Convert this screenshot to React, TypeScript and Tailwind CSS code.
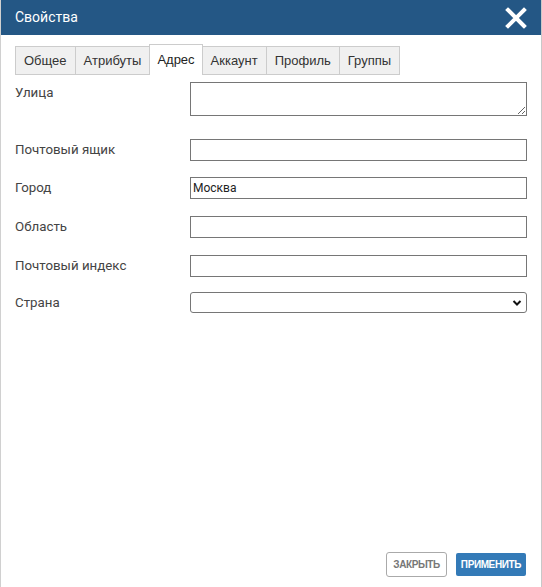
import React from "react";

const tabs = ["Общее", "Атрибуты", "Адрес", "Аккаунт", "Профиль", "Группы"];

function Row({
  label,
  children,
  className = "",
}: {
  label: string;
  children: React.ReactNode;
  className?: string;
}) {
  return (
    <div className={`flex items-start ${className}`}>
      <label className="w-[175px] shrink-0 pt-[3px] text-[13.3px] leading-[16px] text-[#444]">
        {label}
      </label>
      <div className="flex-1">{children}</div>
    </div>
  );
}

export default function App() {
  return (
    <div
      className="flex h-[587px] w-[542px] bg-white"
      style={{ fontFamily: 'Roboto, "Liberation Sans", Arial, sans-serif' }}
    >
      <div className="flex w-[541px] flex-col border-l border-[#d0d0d0]">
        <div className="flex h-[35px] shrink-0 items-center justify-between bg-[#245785] pl-[14px] pr-[14px]">
          <span className="text-[14px] text-white">Свойства</span>
          <svg width="22" height="22" viewBox="0 0 22 22">
            <path
              d="M3 3 L19 19 M19 3 L3 19"
              stroke="white"
              strokeWidth="4"
              strokeLinecap="square"
            />
          </svg>
        </div>

        <div className="flex flex-1 flex-col px-[14px]">
          <div
            className="mt-[9px] flex items-end"
            style={{ fontFamily: '"Liberation Sans", Arial, sans-serif' }}
          >
            {tabs.map((t) => {
              const active = t === "Адрес";
              return (
                <div
                  key={t}
                  className={
                    active
                      ? "-ml-px flex h-[31px] items-center border border-b-0 border-[#ccc] bg-white px-[7px] text-[13px] text-[#222]"
                      : "-ml-px flex h-[29px] items-center border border-[#ccc] bg-[#f0f0f0] px-[8px] text-[13px] text-[#333] first:ml-0"
                  }
                >
                  {t}
                </div>
              );
            })}
          </div>

          <Row label="Улица" className="mt-[7px]">
            <textarea className="block h-[34px] w-full resize-y border border-[#767676] bg-white" />
          </Row>
          <Row label="Почтовый ящик" className="mt-[23px]">
            <input className="block h-[22px] w-full border border-[#767676]" />
          </Row>
          <Row label="Город" className="mt-[16px]">
            <input
              defaultValue="Москва"
              className="block h-[22px] w-full border border-[#767676] px-[2px] text-[12px] text-[#222]"
            />
          </Row>
          <Row label="Область" className="mt-[17px]">
            <input className="block h-[22px] w-full border border-[#767676]" />
          </Row>
          <Row label="Почтовый индекс" className="mt-[17px]">
            <input className="block h-[22px] w-full border border-[#767676]" />
          </Row>
          <Row label="Страна" className="mt-[15px]">
            <div className="relative flex h-[21px] w-full items-center rounded-[3px] border border-[#767676]">
              <svg
                className="absolute right-[4px]"
                width="10"
                height="8"
                viewBox="0 0 10 8"
              >
                <path
                  d="M1.5 2 L5 5.5 L8.5 2"
                  stroke="#111"
                  strokeWidth="2"
                  fill="none"
                />
              </svg>
            </div>
          </Row>

          <div className="mt-auto mb-[10px] flex justify-end gap-[9px] pr-[1px]">
            <button
              className="h-[25px] rounded-[3px] border border-[#aaa] bg-white px-[6px] text-[10px] font-bold tracking-[-0.4px] text-[#777]"
              style={{ fontFamily: '"Liberation Sans", Arial, sans-serif' }}
            >
              ЗАКРЫТЬ
            </button>
            <button
              className="my-[1px] h-[23px] rounded-[2px] bg-[#337ab7] px-[5px] text-[10px] font-bold tracking-[-0.4px] text-white"
              style={{ fontFamily: '"Liberation Sans", Arial, sans-serif' }}
            >
              ПРИМЕНИТЬ
            </button>
          </div>
        </div>
      </div>
      <div className="w-px bg-[#c8c8c8]" />
    </div>
  );
}
